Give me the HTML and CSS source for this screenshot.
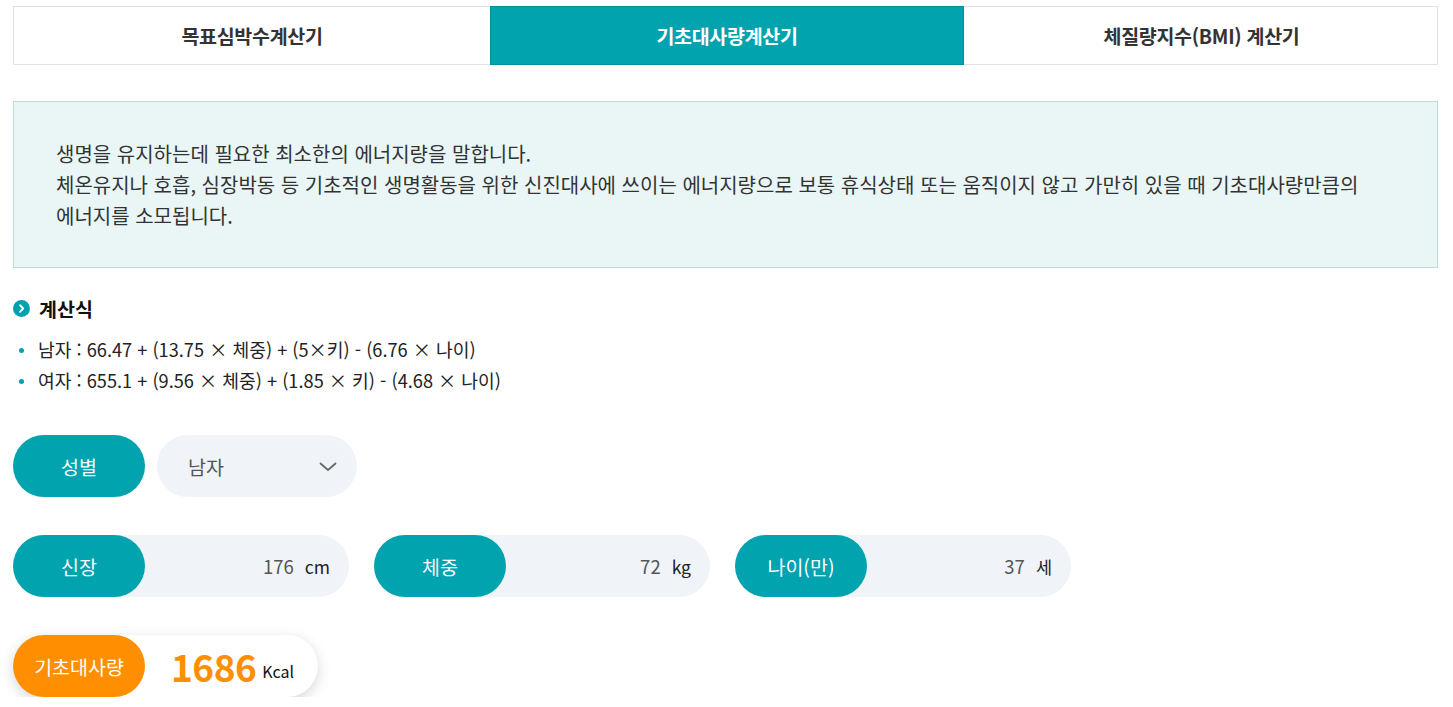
FILE: index.html
```html
<!DOCTYPE html>
<html lang="ko">
<head>
<meta charset="utf-8">
<title>기초대사량계산기</title>
<link rel="stylesheet" href="styles.css">
</head>
<body>
<div class="page">
  <nav class="tabs">
    <a class="tab">목표심박수계산기</a>
    <a class="tab active">기초대사량계산기</a>
    <a class="tab">체질량지수(BMI) 계산기</a>
  </nav>

  <div class="info">
    생명을 유지하는데 필요한 최소한의 에너지량을 말합니다.<br>
    체온유지나 호흡, 심장박동 등 기초적인 생명활동을 위한 신진대사에 쓰이는 에너지량으로 보통 휴식상태 또는 움직이지 않고 가만히 있을 때 기초대사량만큼의<br>
    에너지를 소모됩니다.
  </div>

  <h3 class="heading">
    <span class="heading-icon"><svg viewBox="0 0 17 17" width="17" height="17"><circle cx="8.5" cy="8.5" r="8.5" fill="#00a1af"/><path d="M7 5.2 L10.2 8.5 L7 11.8" fill="none" stroke="#fff" stroke-width="1.8" stroke-linecap="round" stroke-linejoin="round"/></svg></span>
    계산식
  </h3>
  <ul class="formula">
    <li>남자 : 66.47 + (13.75 × 체중) + (5×키) - (6.76 × 나이)</li>
    <li>여자 : 655.1 + (9.56 × 체중) + (1.85 × 키) - (4.68 × 나이)</li>
  </ul>

  <div class="row">
    <span class="pill-label">성별</span>
    <div class="select">
      <span>남자</span>
      <svg viewBox="0 0 18 10" width="18" height="10"><path d="M1.5 1.5 L9 8 L16.5 1.5" fill="none" stroke="#666" stroke-width="1.8" stroke-linecap="round" stroke-linejoin="round"/></svg>
    </div>
  </div>

  <div class="row inputs">
    <div class="field">
      <span class="pill-label">신장</span>
      <span class="value">176</span><span class="unit">cm</span>
    </div>
    <div class="field">
      <span class="pill-label">체중</span>
      <span class="value">72</span><span class="unit">kg</span>
    </div>
    <div class="field">
      <span class="pill-label">나이(만)</span>
      <span class="value">37</span><span class="unit">세</span>
    </div>
  </div>

  <div class="row">
    <div class="result">
      <span class="pill-label orange">기초대사량</span>
      <span class="result-num">1686</span><span class="result-unit">Kcal</span>
    </div>
  </div>
</div>
</body>
</html>
```

FILE: styles.css
```css
* { box-sizing: border-box; }
html, body { margin: 0; padding: 0; background: #fff; }
body {
  font-family: "Noto Sans CJK KR", "Noto Sans", sans-serif;
  color: #333;
}
.page {
  width: 1425px;
  margin-left: 13px;
  padding-top: 6px;
}
.tabs {
  display: grid;
  grid-template-columns: 476px 474px 475px;
  border: 1px solid #e2e2e2;
  height: 59px;
}
.tab {
  display: flex;
  align-items: center;
  justify-content: center;
  font-size: 19.5px;
  font-weight: 700;
  color: #333;
  letter-spacing: -0.3px;
}
.tab.active {
  background: #00a3ae;
  color: #fff;
  margin: -1px 0;
  border: 1px solid #00909b;
}
.info {
  margin-top: 36px;
  background: #eaf6f6;
  border: 1px solid #bcdcdc;
  padding: 36px 42px;
  font-size: 20px;
  line-height: 31px;
  color: #333;
}
.heading {
  margin: 28px 0 0;
  display: flex;
  align-items: center;
  height: 24px;
  font-size: 19.5px;
  font-weight: 700;
  color: #111;
}
.heading-icon {
  display: inline-flex;
  width: 17px;
  height: 17px;
  margin-right: 9px;
}
.formula {
  list-style: none;
  margin: 14px 0 0;
  padding: 0;
  font-size: 18.2px;
  line-height: 31px;
  color: #222;
}
.formula li {
  position: relative;
  padding-left: 25px;
}
.formula li::before {
  content: "";
  position: absolute;
  left: 6px;
  top: 14px;
  width: 5px;
  height: 5px;
  border-radius: 50%;
  background: #00a1af;
}
.row {
  display: flex;
  gap: 12px;
  margin-top: 38px;
  height: 62px;
}
.formula + .row { margin-top: 39px; }
.inputs { gap: 25px; }
.pill-label {
  flex: none;
  width: 132px;
  height: 62px;
  border-radius: 31px;
  background: #00a3ae;
  color: #fff;
  font-size: 19.5px;
  display: flex;
  align-items: center;
  justify-content: center;
}
.pill-label.orange { background: #ff8f00; }
.select {
  width: 200px;
  height: 62px;
  border-radius: 31px;
  background: #f0f3f8;
  display: flex;
  align-items: center;
  justify-content: space-between;
  padding: 0 20px 0 31px;
  font-size: 19.5px;
  color: #555;
}
.select svg { margin-top: 2px; }
.field {
  width: 336px;
  height: 62px;
  border-radius: 31px;
  background: #f0f3f8;
  display: flex;
  align-items: center;
  padding-right: 19px;
}
.field .value {
  flex: 1;
  text-align: right;
  font-size: 18.5px;
  color: #555;
}
.field .unit {
  margin-left: 11px;
  font-size: 17.5px;
  color: #222;
}
.result {
  width: 305px;
  height: 62px;
  border-radius: 31px;
  background: #fff;
  box-shadow: 0 4px 14px rgba(0, 0, 0, 0.16);
  display: flex;
  align-items: center;
}
.result-num {
  margin-left: 26px;
  font-size: 37px;
  font-weight: 700;
  color: #ff8f00;
  letter-spacing: -0.5px;
}
.result-unit {
  margin-left: 6px;
  margin-top: 10px;
  font-size: 16px;
  color: #111;
}
```
